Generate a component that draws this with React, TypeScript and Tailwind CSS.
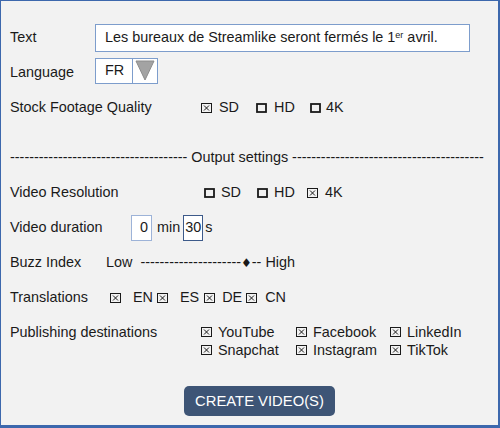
import React from "react";

function Box({ checked }: { checked: boolean }) {
  return checked ? (
    <svg width="11" height="10" viewBox="0 0 11 10" className="shrink-0">
      <rect x="0.5" y="0.5" width="10" height="9" fill="none" stroke="#1a1a1a" strokeWidth="1" />
      <path d="M3 2.5 L8 7.5 M8 2.5 L3 7.5" stroke="#1a1a1a" strokeWidth="1" />
    </svg>
  ) : (
    <svg width="11" height="10" viewBox="0 0 11 10" className="shrink-0">
      <rect x="1" y="1" width="9" height="8" fill="none" stroke="#1a1a1a" strokeWidth="1.8" />
    </svg>
  );
}

function Opt({ checked, label, w, gap = "ml-[7px]" }: { checked: boolean; label: string; w?: string; gap?: string }) {
  return (
    <div className={`flex items-center ${w ?? ""}`}>
      <Box checked={checked} />
      <span className={gap}>{label}</span>
    </div>
  );
}

export default function App() {
  return (
    <div className="w-[500px] h-[428px] bg-[#f2f2f2] border-[#3d68ad] border-l border-t border-r-2 border-b-[3px] text-[14.4px] text-[#1a1a1a] font-['Liberation_Sans',Arial,sans-serif] pt-[19px] pl-[9px] leading-none">
      {/* Text */}
      <div className="flex items-center h-[35px]">
        <div className="w-[85px]">Text</div>
        <div className="w-[375px] h-[28px] border border-[#7d9dcc] bg-white pl-[9px] flex items-center">
          <span>
            Les bureaux de Streamlike seront fermés le 1<sup className="text-[9px] align-super relative top-[1px]">er</sup> avril.
          </span>
        </div>
      </div>
      {/* Language */}
      <div className="flex items-center h-[35px]">
        <div className="w-[85px]">Language</div>
        <div className="flex w-[63px] h-[26px] border border-[#7d9dcc] bg-white mb-[4px]">
          <div className="w-[37px] pl-[9px] flex items-center border-r border-[#7d9dcc]">FR</div>
          <div className="flex-1 flex items-center justify-center">
            <svg width="20" height="21" viewBox="0 0 20 21">
              <polygon points="1,1 19,1 10,20" fill="#a3a3a3" stroke="#8c8c8c" strokeWidth="1" />
            </svg>
          </div>
        </div>
      </div>
      {/* Stock */}
      <div className="flex items-center h-[35px]">
        <div className="w-[191px]">Stock Footage Quality</div>
        <Opt checked label="SD" w="w-[55px]" />
        <Opt checked={false} label="HD" w="w-[54px]" />
        <Opt checked={false} label="4K" gap="ml-[5px]" />
      </div>
      <div className="h-[15px]" />
      {/* Divider */}
      <div className="flex items-center h-[35px] whitespace-pre">
        ------------------------------------- Output settings ----------------------------------------
      </div>
      {/* Video Resolution */}
      <div className="flex items-center h-[35px]">
        <div className="w-[194px]">Video Resolution</div>
        <Opt checked={false} label="SD" w="w-[53px]" gap="ml-[6px]" />
        <Opt checked={false} label="HD" w="w-[50px]" gap="ml-[6px]" />
        <Opt checked label="4K" gap="ml-[7px]" />
      </div>
      {/* Duration */}
      <div className="flex items-center h-[35px]">
        <div className="w-[121px]">Video duration</div>
        <div className="w-[21px] h-[26px] border border-[#9db3d8] bg-white flex items-center justify-end pr-[3px]">0</div>
        <span className="ml-[5px]">min</span>
        <div className="ml-[3px] w-[20px] h-[26px] border border-[#3d5a8a] bg-white flex items-center justify-center">30</div>
        <span className="ml-[2px]">s</span>
      </div>
      {/* Buzz */}
      <div className="flex items-center h-[35px] whitespace-pre">
        <div className="w-[96px]">Buzz Index</div>
        <span>Low</span>
        <span className="ml-[8px]">---------------------</span>
        <span className="font-['DejaVu_Sans',sans-serif] text-[12px]">♦</span>
        <span>-- High</span>
      </div>
      {/* Translations */}
      <div className="flex items-center h-[35px]">
        <div className="w-[100px]">Translations</div>
        <Box checked />
        <span className="ml-[12px]">EN</span>
        <span className="ml-[4px] flex"><Box checked /></span>
        <span className="ml-[12px]">ES</span>
        <span className="ml-[5px] flex"><Box checked /></span>
        <span className="ml-[7px]">DE</span>
        <span className="ml-[4px] flex"><Box checked /></span>
        <span className="ml-[8px]">CN</span>
      </div>
      {/* Publishing */}
      <div className="flex pt-[8px]">
        <div className="w-[191px] h-[18px] flex items-center">Publishing destinations</div>
        <div className="grid grid-cols-[95px_94px_auto] auto-rows-[18px] items-center">
          <Opt checked label="YouTube" gap="ml-[6px]" />
          <Opt checked label="Facebook" gap="ml-[6px]" />
          <Opt checked label="LinkedIn" gap="ml-[6px]" />
          <Opt checked label="Snapchat" gap="ml-[6px]" />
          <Opt checked label="Instagram" gap="ml-[6px]" />
          <Opt checked label="TikTok" gap="ml-[6px]" />
        </div>
      </div>
      {/* Button */}
      <div className="mt-[27px] ml-[174px] w-[151px] h-[30px] rounded-[5px] bg-[#3e5576] text-white text-[14.8px] flex items-center justify-center">
        CREATE VIDEO(S)
      </div>
    </div>
  );
}
